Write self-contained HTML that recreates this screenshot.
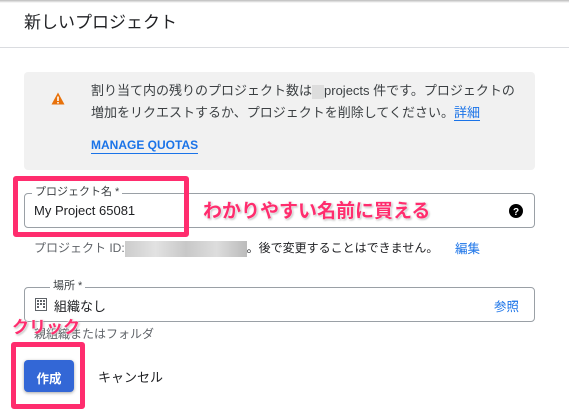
<!DOCTYPE html>
<html><head><meta charset="utf-8"><style>
body{margin:0;width:569px;height:413px;overflow:hidden;background:#fff;font-family:"Liberation Sans","Noto Sans CJK JP",sans-serif;position:relative;color:#202124}
.a{position:absolute;white-space:nowrap}
.pk{position:absolute;border:5px solid #ff2d6e;border-radius:3px;box-sizing:border-box}
.ann{position:absolute;color:#ff2d6e;font-weight:bold;white-space:nowrap;text-shadow:0 0 2px #fff,0 0 2px #fff,1px 1px 2px rgba(0,0,0,.4)}
.fld{position:absolute;border:1px solid #9aa0a6;border-radius:4px;box-sizing:border-box}
.lab{position:absolute;background:#fff;padding:0 3px;font-size:11px;color:#3c4043;line-height:12px}
</style></head><body>
<div style="position:absolute;left:0;top:0;width:569px;height:3px;background:linear-gradient(#bbb,#fff)"></div>
<div class="a" style="left:24px;top:12px;font-size:17px;line-height:22px">新しいプロジェクト</div>
<div style="position:absolute;left:0;top:47px;width:569px;height:1px;background:#dadce0"></div>
<div style="position:absolute;left:24px;top:72px;width:511px;height:98px;background:#f1f1f1;border-radius:4px"></div>
<svg class="a" style="left:51px;top:92px" width="14" height="13" viewBox="0 0 14 13"><path d="M7 0.5L13.5 12.5H0.5Z" fill="#e8710a"/><rect x="6.2" y="4.5" width="1.6" height="4.5" fill="#fff"/><rect x="6.2" y="10" width="1.6" height="1.5" fill="#fff"/></svg>
<div class="a" style="left:91px;top:80px;font-size:13px;line-height:22px;color:#3c4043">割り当て内の残りのプロジェクト数は<span style="display:inline-block;width:12px;height:14px;background:#ddd;vertical-align:middle"></span>projects 件です。プロジェクトの<br>増加をリクエストするか、プロジェクトを削除してください。<span style="color:#1a73e8;border-bottom:1px solid #1a73e8">詳細</span></div>
<div class="a" style="left:91px;top:138px;font-size:12px;font-weight:bold;color:#1a73e8;border-bottom:1px solid #1a73e8;line-height:15px">MANAGE QUOTAS</div>

<div class="fld" style="left:24px;top:193px;width:511px;height:35px"></div>
<div class="lab" style="left:32px;top:186px">プロジェクト名 *</div>
<div class="a" style="left:34px;top:203px;font-size:13px">My Project 65081</div>
<svg class="a" style="left:509px;top:204px" width="14" height="14"><circle cx="7" cy="7" r="7" fill="#000"/><text x="7" y="11" font-size="10" font-weight="bold" fill="#fff" text-anchor="middle" font-family="Liberation Sans">?</text></svg>
<div class="pk" style="left:13px;top:176px;width:176px;height:61px"></div>
<div class="ann" style="left:203px;top:196px;font-size:19px">わかりやすい名前に買える</div>

<div class="a" style="left:34px;top:239px;font-size:12px;color:#5f6368">プロジェクト ID:<span style="display:inline-block;width:122px;height:16px;background:linear-gradient(90deg,#ccc,#e2e2e2,#c8c8c8,#ddd,#bbb);vertical-align:middle"></span><span style="color:#202124">。後で変更することはできません。</span></div>
<div class="a" style="left:455px;top:238px;font-size:12.5px;color:#1a73e8">編集</div>

<div class="fld" style="left:24px;top:287px;width:511px;height:35px"></div>
<div class="lab" style="left:50px;top:280px">場所 *</div>
<svg class="a" style="left:35px;top:298px" width="12" height="13" viewBox="0 0 12 13"><rect x="0.5" y="0.5" width="11" height="12" fill="none" stroke="#5f6368"/><g fill="#5f6368"><rect x="2" y="2" width="2" height="2"/><rect x="5" y="2" width="2" height="2"/><rect x="8" y="2" width="2" height="2"/><rect x="2" y="5" width="2" height="2"/><rect x="5" y="5" width="2" height="2"/><rect x="8" y="5" width="2" height="2"/><rect x="2" y="8" width="2" height="2"/><rect x="8" y="8" width="2" height="2"/></g></svg>
<div class="a" style="left:54px;top:296px;font-size:13px">組織なし</div>
<div class="a" style="left:494px;top:296px;font-size:12.5px;color:#1a73e8">参照</div>
<div class="a" style="left:34px;top:325px;font-size:12px;color:#5f6368">親組織またはフォルダ</div>
<div class="ann" style="left:12px;top:313px;font-size:17px">クリック</div>

<div style="position:absolute;left:24px;top:360px;width:50px;height:32px;background:#3367d6;border-radius:4px;box-shadow:0 1px 3px rgba(0,0,0,.35)"></div>
<div class="a" style="left:24px;top:368px;width:50px;text-align:center;color:#fff;font-size:12.5px;font-weight:bold">作成</div>
<div class="pk" style="left:11px;top:342px;width:74px;height:67px"></div>
<div class="a" style="left:98px;top:367px;font-size:13px">キャンセル</div>
</body></html>
